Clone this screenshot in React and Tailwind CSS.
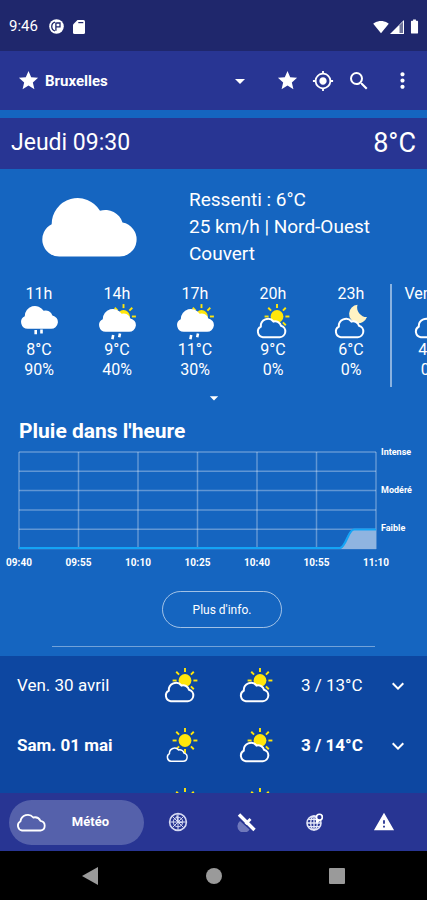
import { useState } from 'react'
import {
  MdArrowDropDown,
  MdBatteryFull,
  MdExpandMore,
  MdGpsFixed,
  MdMoreVert,
  MdSearch,
  MdSignalWifi4Bar,
  MdStar,
  MdWarning,
} from 'react-icons/md'

const CITIES = ['Bruxelles', 'Paris', 'Lyon']

const HOURS = [
  { hour: '11h', icon: 'rain', temp: '8°C', rain: '90%' },
  { hour: '14h', icon: 'sunRain', temp: '9°C', rain: '40%' },
  { hour: '17h', icon: 'sunRain', temp: '11°C', rain: '30%' },
  { hour: '20h', icon: 'sunCloud', temp: '9°C', rain: '0%' },
  { hour: '23h', icon: 'moonCloud', temp: '6°C', rain: '0%' },
]

const TOMORROW = [{ hour: 'Ven. 2h', icon: 'cloud', temp: '4°C', rain: '0%' }]

const DAYS = [
  { label: 'Ven. 30 avril', am: 'sunCloud', pm: 'sunCloud', temp: '3 / 13°C', weekend: false },
  { label: 'Sam. 01 mai', am: 'sunSmallCloud', pm: 'sunCloud', temp: '3 / 14°C', weekend: true },
  { label: 'Dim. 02 mai', am: 'sunCloud', pm: 'sunCloud', temp: '4 / 13°C', weekend: true },
]

const TIMES = ['09:40', '09:55', '10:10', '10:25', '10:40', '10:55', '11:10']
const LEVELS = ['Intense', 'Modéré', 'Faible']

const BIG_CLOUD = 'M17.5 59.5A17 17 0 0 1 9.7 27.3A26 26 0 0 1 58 13.7A18 18 0 0 1 80.5 25.5A17.15 17.15 0 0 1 76.5 59.5Z'
const OUTLINE_CLOUD = 'M6.8 33.2A5.7 5.7 0 0 1 4.8 22.6A7.2 7.2 0 0 1 17.5 17.5A6 6 0 0 1 25 21.8A5.8 5.8 0 0 1 23.8 33.2Z'

function Sun({ cx, cy, r = 6.4 }) {
  return (
    <g transform={`translate(${cx} ${cy})`} stroke="#ffe60a" strokeWidth="1.9">
      <circle r={r} fill="#ffe60a" stroke="none" />
      {[0, 45, 90, 135, 180, 225, 270, 315].map(a => (
        <line key={a} x1={r + 2} x2={r + 6} transform={`rotate(${a})`} />
      ))}
    </g>
  )
}

// The cloud is filled with the colour behind it so it hides the sun or the moon
function WeatherIcon({ name, back = '#1565c0' }) {
  if (name === 'rain') {
    return (
      <svg width="38" height="36" viewBox="0 0 38 36" aria-hidden="true">
        <path d={BIG_CLOUD} fill="#fff" transform="translate(1 1.5) scale(.39)" />
        <path d="M15.7 26v4.2M21.5 25.5v4" stroke="#fff" strokeWidth="2.6" />
      </svg>
    )
  }
  if (name === 'sunRain') {
    return (
      <svg width="38" height="36" viewBox="0 0 38 36" aria-hidden="true">
        <Sun cx={25.5} cy={12.5} />
        <path d={BIG_CLOUD} fill="#fff" transform="translate(1 4.5) scale(.39)" />
        <path d="M15.2 31l-.8 4.2M22 29.5l-.8 3.8" stroke="#fff" strokeWidth="2.6" />
      </svg>
    )
  }
  return (
    <svg width="34" height="36" viewBox="0 0 34 36" aria-hidden="true">
      {name === 'moonCloud' && (
        <path d="M23.5 .8A9.2 9.2 0 1 0 33 13A9.5 9.5 0 0 1 23.5 .8Z" fill="#fff3c4" />
      )}
      {(name === 'sunCloud' || name === 'sunSmallCloud') && <Sun cx={21} cy={12.5} />}
      <path
        d={OUTLINE_CLOUD}
        fill={back}
        stroke="#fff"
        strokeWidth="2"
        transform={name === 'sunSmallCloud' ? 'translate(2 9.4) scale(.72)' : undefined}
      />
    </svg>
  )
}

function StatusBar() {
  return (
    <div className="flex h-[51px] shrink-0 items-center justify-between bg-[#1f276c] pt-0.5 pr-1 pl-[9px]">
      <div className="flex items-center">
        <span className="text-[15px]">9:46</span>
        <svg className="ml-[11px]" width="15" height="15" viewBox="0 0 15 15" aria-hidden="true">
          <circle cx="7.5" cy="7.5" r="7.3" fill="#fff" />
          <path d="M6 3.2A4.6 4.6 0 0 0 6 12M6.9 3.5v8.3M7.5 4H11V7.8H7.5" fill="none" stroke="#1f276c" strokeWidth="1.3" />
        </svg>
        <svg className="ml-[9px]" width="12" height="14" viewBox="0 0 12 14" aria-hidden="true">
          <path d="M4.5 0H10.5Q12 0 12 1.5V12.5Q12 14 10.5 14H1.5Q0 14 0 12.5V4.5Z" fill="#fff" />
          <path d="M5.3 2.6H10.3" stroke="#1f276c" strokeWidth="1.2" />
        </svg>
      </div>
      <div className="flex items-center">
        <MdSignalWifi4Bar size={16} />
        <svg className="ml-px" width="14" height="14" viewBox="0 0 14 14" aria-hidden="true">
          <path d="M0 14L14 0V14Z" fill="#fff" />
          <path d="M9.5 5.2L13 1.8V13H9.5Z" fill="#6d7299" />
        </svg>
        <MdBatteryFull className="ml-0.5" size={17} />
      </div>
    </div>
  )
}

function IconButton({ label, children }) {
  return (
    <button type="button" aria-label={label} className="flex size-9 cursor-pointer items-center justify-center">
      {children}
    </button>
  )
}

function AppBar() {
  return (
    <header className="flex h-[59px] shrink-0 items-center bg-[#283593] pr-[7px] pl-[17px]">
      <MdStar size={23} className="shrink-0" />
      <div className="relative ml-[5px] flex-1">
        <select
          aria-label="Ville"
          className="w-full cursor-pointer appearance-none bg-transparent pr-6 text-[15px] font-bold outline-none"
        >
          {CITIES.map(city => (
            <option key={city} className="text-black">{city}</option>
          ))}
        </select>
        <MdArrowDropDown size={24} className="pointer-events-none absolute top-0 right-0" />
      </div>
      <div className="ml-[17px] flex">
        <IconButton label="Favoris"><MdStar size={23} /></IconButton>
        <IconButton label="Ma position"><MdGpsFixed size={22} /></IconButton>
        <IconButton label="Rechercher"><MdSearch size={24} /></IconButton>
      </div>
      <div className="ml-[7px]">
        <IconButton label="Menu"><MdMoreVert size={25} /></IconButton>
      </div>
    </header>
  )
}

function HourItem({ item }) {
  return (
    <div className="flex w-[78px] shrink-0 flex-col items-center whitespace-nowrap">
      <span>{item.hour}</span>
      <WeatherIcon name={item.icon} />
      <span>{item.temp}</span>
      <span>{item.rain}</span>
    </div>
  )
}

function RainChart() {
  return (
    <section className="pr-[11px] pl-[19px]">
      <h2 className="text-[21px] leading-7 font-bold">Pluie dans l'heure</h2>
      <div className="mt-[7px] flex">
        <div className="flex-1">
          <svg className="block h-[97px] w-full overflow-visible" viewBox="0 0 357 97" preserveAspectRatio="none" aria-hidden="true">
            <g stroke="#fff" strokeOpacity=".32" strokeWidth="1.5">
              {[0, 1, 2, 3, 4, 5].map(i => (
                <line key={i} x1="0" x2="357" y1={i * 19.3} y2={i * 19.3} />
              ))}
              {[0, 1, 2, 3, 4, 5, 6].map(i => (
                <line key={i} x1={i * 59.5} x2={i * 59.5} y1="0" y2="97" />
              ))}
            </g>
            <path d="M322 97C327 94 328 78 335 77.5H357V97Z" fill="#8fb4e0" />
            <path d="M0 96H321C327 95 329 78 335 77.5H357" fill="none" stroke="#14a4f5" strokeWidth="2.2" />
          </svg>
          <div className="mt-[7px] flex justify-between text-[10px] leading-[14px] font-bold">
            {TIMES.map(time => (
              <span key={time} className="flex w-0 justify-center">{time}</span>
            ))}
          </div>
        </div>
        {/* one label every two lines of the grid */}
        <div className="-mt-[5px] ml-[5px] flex w-[35px] flex-col gap-7 text-[9px] leading-[10px] font-bold">
          {LEVELS.map(level => <span key={level}>{level}</span>)}
        </div>
      </div>
    </section>
  )
}

function DayRow({ day }) {
  return (
    <button
      type="button"
      className={`flex h-[60px] w-full cursor-pointer items-center px-[17px] text-left text-[17px] ${day.weekend ? 'font-bold' : ''}`}
    >
      <span className="flex-1">{day.label}</span>
      <span className="flex gap-[41px]">
        <WeatherIcon name={day.am} back="#0d47a1" />
        <WeatherIcon name={day.pm} back="#0d47a1" />
      </span>
      <span className="ml-7 w-[85px]">{day.temp}</span>
      <MdExpandMore size={24} />
    </button>
  )
}

const TABS = [
  {
    id: 'radar',
    label: 'Radar',
    icon: (
      <svg width="20" height="20" viewBox="0 0 20 20" fill="none" stroke="#d5d9f2" aria-hidden="true">
        <circle cx="10" cy="10" r="8.4" strokeWidth="1.6" />
        <circle cx="10" cy="10" r="4.8" strokeWidth="1" />
        <path d="M10 2V18M2 10H18M4.4 4.4L15.6 15.6M15.6 4.4L4.4 15.6" strokeWidth="1" />
        <path d="M10 10L9 3.5M10 10L14 10.5" strokeWidth="1.6" />
      </svg>
    ),
  },
  {
    id: 'satellite',
    label: 'Satellite',
    icon: (
      <svg width="20" height="20" viewBox="0 0 20 20" aria-hidden="true">
        <path d="M3 9A6.5 6.5 0 1 0 12.5 17.5L8 13.5Z" fill="#6f78bb" />
        <path d="M2 2.5L17.5 18" stroke="#fff" strokeWidth="3.4" />
        <path d="M12.5 6L14.5 8L9.5 13L7.5 11Z" fill="#fff" />
      </svg>
    ),
  },
  {
    id: 'monde',
    label: 'Monde',
    icon: (
      <svg width="20" height="20" viewBox="0 0 20 20" fill="none" stroke="#e4e7f8" aria-hidden="true">
        <circle cx="9" cy="11" r="7" strokeWidth="1.6" />
        <ellipse cx="9" cy="11" rx="3.3" ry="7" strokeWidth="1.3" />
        <path d="M9 4V18M2 11H16M3.2 7.3H14M3.2 14.7H14.8" strokeWidth="1.3" />
        <path d="M11.5 11.5C10 8 10.5 2 14.5 2C18.5 2 18.5 6 16.5 8Z" fill="#fff" stroke="none" />
        <circle cx="14.4" cy="5.2" r="2.9" fill="#283593" stroke="#fff" strokeWidth="1.6" />
      </svg>
    ),
  },
  { id: 'alertes', label: 'Alertes', icon: <MdWarning size={22} /> },
]

function BottomNav() {
  return (
    <nav className="flex h-[58px] shrink-0 items-center bg-[#283593] px-[9px]">
      <button type="button" className="flex h-[45px] w-[135px] cursor-pointer items-center rounded-full bg-[#5561ab] pr-[35px] pl-[7px]">
        <svg width="30" height="20" viewBox="0 0 30 20" aria-hidden="true">
          <path
            d="M6 18.5A5 5 0 0 1 4.5 9.2A7.3 7.3 0 0 1 17.3 5.5A6.5 6.5 0 0 1 24.5 8.8A4.9 4.9 0 0 1 24.5 18.5Z"
            fill="none"
            stroke="#fff"
            strokeWidth="1.8"
          />
        </svg>
        <span className="ml-auto text-[13px] font-bold">Météo</span>
      </button>
      {TABS.map(tab => (
        <button key={tab.id} type="button" aria-label={tab.label} className="flex h-full flex-1 cursor-pointer items-center justify-center">
          {tab.icon}
        </button>
      ))}
    </nav>
  )
}

function SystemBar() {
  return (
    <div className="flex h-[49px] shrink-0 items-center justify-center gap-[107px] bg-black">
      <svg width="17" height="18" viewBox="0 0 17 18" aria-hidden="true"><path d="M0 9L16 0V18Z" fill="#9a9a9a" /></svg>
      <span className="size-4 rounded-full bg-[#9a9a9a]" />
      <span className="size-4 rounded-[1px] bg-[#9a9a9a]" />
    </div>
  )
}

export default function App() {
  const [showMore, setShowMore] = useState(false)

  return (
    <div className="flex h-screen flex-col bg-[#1565c0] font-['Roboto',sans-serif] text-white">
      <StatusBar />
      <AppBar />

      <main className="min-h-0 flex-1 overflow-y-auto pt-2 [scrollbar-width:none]">
        <div className="flex h-[51px] items-center justify-between bg-[#283593] px-[11px]">
          <h1 className="text-[23px]">Jeudi 09:30</h1>
          <span className="text-[27px]">8°C</span>
        </div>

        <div className="grid grid-cols-[179px_1fr] items-center gap-x-[10px] pt-[17px]">
          <svg className="mx-auto" width="96" height="60" viewBox="0 0 96 60" aria-hidden="true">
            <path d={BIG_CLOUD} fill="#fff" />
          </svg>
          <div className="text-[19px] leading-[27px]">
            <p>Ressenti : 6°C</p>
            <p>25 km/h | Nord-Ouest</p>
            <p>Couvert</p>
          </div>
        </div>

        {/* Prévisions heure par heure, défilement horizontal */}
        <div className="mt-[17px] flex h-[103px] overflow-x-auto text-base leading-5 [scrollbar-width:none]">
          {HOURS.map(item => <HourItem key={item.hour} item={item} />)}
          <div className="w-[2px] shrink-0 bg-white/50" />
          {TOMORROW.map(item => <HourItem key={item.hour} item={item} />)}
        </div>

        <button
          type="button"
          aria-label="Afficher plus"
          onClick={() => setShowMore(!showMore)}
          className="mx-auto mb-2 flex h-[22px] w-10 cursor-pointer items-center justify-center"
        >
          <MdArrowDropDown size={20} className={showMore ? 'rotate-180' : ''} />
        </button>

        <RainChart />

        <div className="mt-[21px] flex justify-center pl-[17px]">
          <button type="button" className="h-[37px] w-[120px] cursor-pointer rounded-full border border-white/60 text-xs">
            Plus d'info.
          </button>
        </div>
        <hr className="mx-[52px] mt-[18px] border-t border-white/40" />

        <div className="mt-[9px] bg-[#0d47a1]">
          {DAYS.map(day => <DayRow key={day.label} day={day} />)}
        </div>
      </main>

      <BottomNav />
      <SystemBar />
    </div>
  )
}
